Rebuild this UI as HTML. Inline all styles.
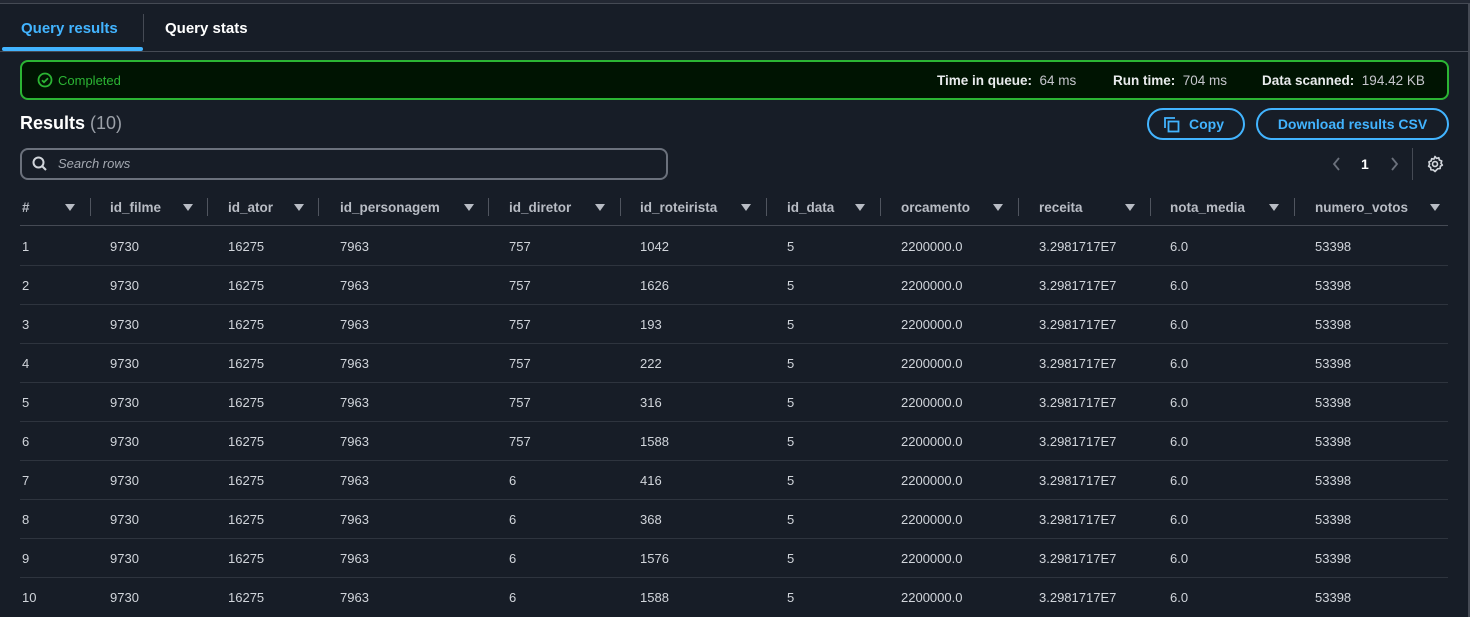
<!DOCTYPE html>
<html><head><meta charset="utf-8"><style>
*{margin:0;padding:0;box-sizing:border-box}
body{width:1470px;height:617px;background:#171d27;font-family:"Liberation Sans",sans-serif;color:#d1d5db;position:relative;overflow:hidden;font-size:13px}
.a{position:absolute;white-space:nowrap}
.hd{font-weight:bold;color:#b8bcc4;font-size:13.5px}
.f{position:absolute;width:0;height:0;border-left:5px solid transparent;border-right:5px solid transparent;border-top:7px solid #b8bcc4}
.dv{position:absolute;width:1px;height:18px;background:#50555f;top:198px}
.rl{position:absolute;left:20px;width:1428px;height:1px;background:#2e343e}
.c{position:absolute;color:#d1d5db;font-size:13px}
</style></head><body>
<div class="a" style="left:0;top:0;width:1470px;height:3px;background:#232833"></div>
<div class="a" style="left:0;top:3px;width:1470px;height:1px;background:#454a54"></div>
<div class="a" style="left:1468px;top:3px;width:2px;height:614px;background:#454a54"></div>
<div class="a" style="left:0;top:51px;width:1470px;height:1px;background:#454a54"></div>
<div class="a" style="left:21px;top:20px;font-weight:bold;color:#42b4ff;font-size:15px">Query results</div>
<div class="a" style="left:2px;top:47px;width:141px;height:4px;background:#42b4ff;border-radius:2px"></div>
<div class="a" style="left:143px;top:14px;width:1px;height:28px;background:#454a54"></div>
<div class="a" style="left:165px;top:20px;font-weight:bold;color:#fff;font-size:15px">Query stats</div>
<div class="a" style="left:20px;top:60px;width:1429px;height:40px;border:2px solid #2bb534;border-radius:8px;background:#001402"></div>
<svg class="a" style="left:37px;top:72px" width="16" height="16" viewBox="0 0 16 16"><circle cx="8" cy="8" r="6.5" fill="none" stroke="#2bb534" stroke-width="1.8"/><path d="M5 8.2l2 2 4-4" fill="none" stroke="#2bb534" stroke-width="1.8"/></svg>
<div class="a" style="left:58px;top:73px;color:#2bb534;font-size:13px">Completed</div>
<div class="a" style="left:937px;top:73px;font-size:13.5px;color:#e9ebed"><b>Time in queue:</b>&nbsp; <span style="color:#c6c6cd">64 ms</span></div>
<div class="a" style="left:1113px;top:73px;font-size:13.5px;color:#e9ebed"><b>Run time:</b>&nbsp; <span style="color:#c6c6cd">704 ms</span></div>
<div class="a" style="left:1262px;top:73px;font-size:13.5px;color:#e9ebed"><b>Data scanned:</b>&nbsp; <span style="color:#c6c6cd">194.42 KB</span></div>
<div class="a" style="left:20px;top:113px;font-size:18px;font-weight:bold;color:#fff">Results <span style="font-weight:normal;color:#9ba0a8">(10)</span></div>
<div class="a" style="left:1147px;top:108px;width:98px;height:32px;border:2px solid #42b4ff;border-radius:16px"></div>
<svg class="a" style="left:1163px;top:116px" width="18" height="18" viewBox="0 0 18 18"><path d="M2 12V2h10" fill="none" stroke="#42b4ff" stroke-width="1.8"/><rect x="5.5" y="5.5" width="10" height="10" fill="none" stroke="#42b4ff" stroke-width="1.8"/></svg>
<div class="a" style="left:1189px;top:116px;font-weight:bold;color:#42b4ff;font-size:14px">Copy</div>
<div class="a" style="left:1256px;top:108px;width:193px;height:32px;border:2px solid #42b4ff;border-radius:16px;color:#42b4ff;font-weight:bold;font-size:14px;text-align:center;line-height:28px">Download results CSV</div>
<div class="a" style="left:20px;top:148px;width:648px;height:32px;border:2px solid #6b717c;border-radius:8px"></div>
<svg class="a" style="left:32px;top:156px" width="16" height="16" viewBox="0 0 16 16"><circle cx="6.5" cy="6.5" r="5" fill="none" stroke="#d1d5db" stroke-width="2"/><path d="M10 10l4 4" stroke="#d1d5db" stroke-width="2"/></svg>
<div class="a" style="left:58px;top:156px;font-style:italic;color:#a4a9b1;font-size:13px">Search rows</div>
<svg class="a" style="left:1332px;top:157px" width="10" height="14" viewBox="0 0 10 14"><path d="M7 1L2 7l5 6" fill="none" stroke="#6b717c" stroke-width="1.8"/></svg>
<div class="a" style="left:1361px;top:156px;color:#fff;font-weight:bold;font-size:14px">1</div>
<svg class="a" style="left:1389px;top:157px" width="10" height="14" viewBox="0 0 10 14"><path d="M3 1l5 6-5 6" fill="none" stroke="#6b717c" stroke-width="1.8"/></svg>
<div class="a" style="left:1412px;top:148px;width:1px;height:32px;background:#454a54"></div>
<svg class="a" style="left:1426px;top:155px" width="18" height="18" viewBox="0 0 24 24"><path d="M12 2l2 2.5 3-.8.8 3L21 8l-1 3 1.8 2.5-2.7 1.5-.3 3.1-3.1.1L12 22l-2.4-2.1-3.1-.1-.3-3.1L3.5 15 4.8 12.3 3.9 9.2l2.9-1.3.8-3 3 .6z" fill="none" stroke="#d1d5db" stroke-width="2.2" stroke-linejoin="round"/><circle cx="12" cy="12" r="3.3" fill="none" stroke="#d1d5db" stroke-width="2.2"/></svg>

<div class="a hd" style="left:22px;top:200px">#</div><div class="f" style="left:65px;top:204px"></div><div class="dv" style="left:90px"></div>
<div class="a hd" style="left:110px;top:200px">id_filme</div><div class="f" style="left:183px;top:204px"></div><div class="dv" style="left:207px"></div>
<div class="a hd" style="left:228px;top:200px">id_ator</div><div class="f" style="left:294px;top:204px"></div><div class="dv" style="left:318px"></div>
<div class="a hd" style="left:340px;top:200px">id_personagem</div><div class="f" style="left:464px;top:204px"></div><div class="dv" style="left:488px"></div>
<div class="a hd" style="left:509px;top:200px">id_diretor</div><div class="f" style="left:595px;top:204px"></div><div class="dv" style="left:620px"></div>
<div class="a hd" style="left:640px;top:200px">id_roteirista</div><div class="f" style="left:741px;top:204px"></div><div class="dv" style="left:766px"></div>
<div class="a hd" style="left:787px;top:200px">id_data</div><div class="f" style="left:855px;top:204px"></div><div class="dv" style="left:880px"></div>
<div class="a hd" style="left:901px;top:200px">orcamento</div><div class="f" style="left:993px;top:204px"></div><div class="dv" style="left:1018px"></div>
<div class="a hd" style="left:1039px;top:200px">receita</div><div class="f" style="left:1125px;top:204px"></div><div class="dv" style="left:1150px"></div>
<div class="a hd" style="left:1170px;top:200px">nota_media</div><div class="f" style="left:1269px;top:204px"></div><div class="dv" style="left:1294px"></div>
<div class="a hd" style="left:1315px;top:200px">numero_votos</div><div class="f" style="left:1430px;top:204px"></div>
<div class="rl" style="top:225px;background:#454a54"></div>
<div id="rows"></div>
<script>
var r=[1042,1626,193,222,316,1588,416,368,1576,1588],d=[757,757,757,757,757,757,6,6,6,6],h='';
var xs=[22,110,228,340,509,640,787,901,1039,1170,1315];
for(var i=0;i<10;i++){var y=239+39*i;var v=[i+1,9730,16275,7963,d[i],r[i],5,'2200000.0','3.2981717E7','6.0',53398];
for(var j=0;j<11;j++)h+='<div class="c" style="left:'+xs[j]+'px;top:'+y+'px">'+v[j]+'</div>';
if(i<9)h+='<div class="rl" style="top:'+(y+26)+'px"></div>';}
document.getElementById('rows').innerHTML=h;
</script>
</body></html>
